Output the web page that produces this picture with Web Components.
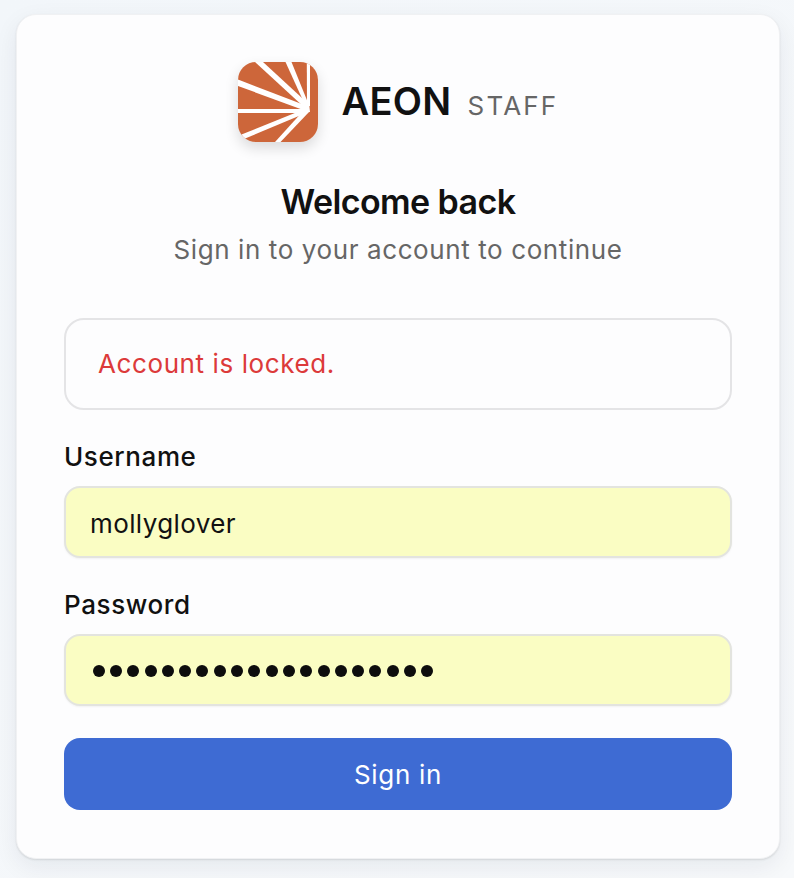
<!DOCTYPE html>
<html><head><meta charset="utf-8"><style>
html,body{margin:0;padding:0}
body{width:794px;height:878px;overflow:hidden;background:linear-gradient(135deg,#f2f6fa,#f7f9fb);font-family:Inter,"Liberation Sans",sans-serif;color:#111}
</style></head><body>
<login-card></login-card>
<script>
function def(name,html,init){customElements.define(name,class extends HTMLElement{constructor(){super();this.attachShadow({mode:'open'}).innerHTML=html;}connectedCallback(){init&&init(this)}})}
def('brand-logo',`<style>:host{display:block;width:80px;height:80px;border-radius:18px;box-shadow:0 6px 14px rgba(0,0,0,.14)}svg{display:block;border-radius:18px}</style>
<svg width="80" height="80" viewBox="0 0 80 80"><rect width="80" height="80" fill="#cd663a"/>
<g fill="#fff"><path d="M68.800 0H72V44H69Z"/><path d="M47.500 0H53.500L70.500 42L67.500 44Z"/><path d="M17 0H25L70 41.500L66.500 45.500Z"/><path d="M0 17.500V24L68 49L69 44Z"/><path d="M0 47H66L68 47V51L66 51H0Z"/><path d="M3.500 72.500L6 77L68 51L65.500 47.500Z"/><path d="M37 80H42.500L71 50L66.500 47.500Z"/><path d="M65 45.500L71 40.500L72 50L65 50.500Z"/></g></svg>`);
def('brand-header',`<style>:host{display:flex;align-items:center;justify-content:center;gap:24px}
.t{display:flex;align-items:baseline;gap:16px;padding-top:3px}.n{font-size:38px;font-weight:600;letter-spacing:.3px;line-height:40px;color:#111}.s{font-size:26px;font-weight:400;letter-spacing:2.200px;color:#666;line-height:40px}</style>
<brand-logo></brand-logo><div class="t"><span class="n">AEON</span><span class="s">STAFF</span></div>`);
def('alert-box',`<style>:host{box-sizing:border-box;height:92px;border:2px solid #e4e4e6;border-radius:20px;padding:0 32px 2px;display:flex;align-items:center;color:#dc3a3a;font-size:26px;letter-spacing:.6px;margin-top:50px}</style><slot></slot>`);
def('form-field',`<style>:host{display:block;margin-top:29px}
label{display:block;font-size:26px;font-weight:500;letter-spacing:.6px;color:#111;line-height:36px;margin-bottom:11px}
.i{box-sizing:border-box;height:72px;border:2px solid #e3e4df;border-radius:16px;background:#fafdc3;padding:2px 24px 0;display:flex;align-items:center;font-size:26px;letter-spacing:.4px;color:#111;box-shadow:0 1px 2px rgba(0,0,0,.05)}
.d{display:flex;gap:5.300px;padding-left:2.700px}.d i{display:block;width:12px;height:12px;border-radius:50%;background:#0d0d0d}
.v{white-space:pre}</style><label></label><div class="i"></div>`,el=>{
 el.shadowRoot.querySelector('label').textContent=el.getAttribute('label');
 const b=el.shadowRoot.querySelector('.i');
 if(el.hasAttribute('dots')){b.innerHTML='<div class="d" role="img" aria-label="password">'+'<i></i>'.repeat(+el.getAttribute('dots'))+'</div>'}
 else{b.innerHTML='<span class="v"></span>';b.firstChild.textContent=el.getAttribute('value')}
});
def('sign-button',`<style>:host{display:flex;align-items:center;justify-content:center;height:72px;background:#3e6bd3;color:#fff;border-radius:16px;font-size:26px;font-weight:400;letter-spacing:.7px;margin-top:32px}</style><slot></slot>`);
def('login-card',`<style>:host{display:block;box-sizing:border-box;width:764px;height:845px;margin:14px 0 0 16px;padding:47px;background:#fdfdfe;border-radius:20px;border:1px solid #f0f1f3;box-shadow:0 1px 2px rgba(0,0,0,.10),0 8px 24px rgba(20,30,50,.07)}
h1{margin:0;font-size:34px;font-weight:600;letter-spacing:-.6px;text-align:center;line-height:40px;margin-top:40px;color:#111}
p{margin:10px 0 0;font-size:26px;letter-spacing:.6px;color:#666;text-align:center;line-height:36px}
</style>
<brand-header></brand-header><h1>Welcome back</h1><p>Sign in to your account to continue</p>
<alert-box>Account is locked.</alert-box>
<form-field label="Username" value="mollyglover"></form-field>
<form-field label="Password" dots="20"></form-field>
<sign-button>Sign in</sign-button>`);
</script></body></html>
